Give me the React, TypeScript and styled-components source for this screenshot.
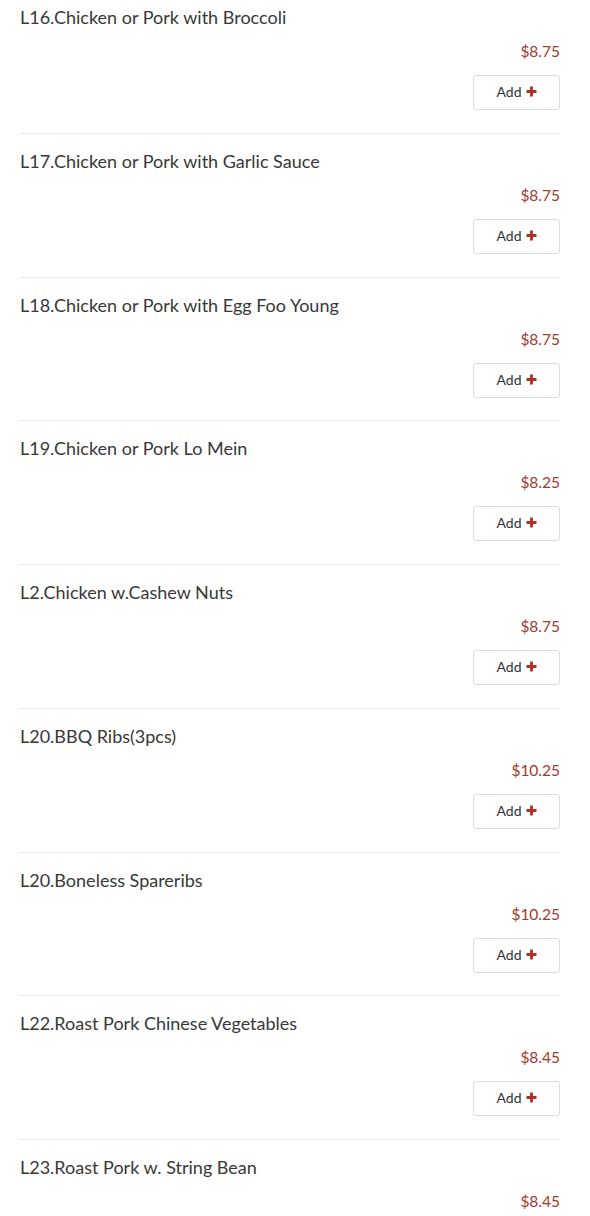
import React from "react";
import styled, { createGlobalStyle } from "styled-components";

const Global = createGlobalStyle`
  html, body { margin: 0; padding: 0; background: #fff; }
  body { font-family: "Lato", "Open Sans", sans-serif; color: #333; }
`;

const List = styled.div`
  width: 540px;
  padding: 5px 30px 0 20px;
`;

const Item = styled.div`
  display: flex;
  flex-direction: column;
  padding: 15px 0 22.75px;
  border-bottom: 1px solid #eaeaea;
  &:first-child { padding-top: 0; }
`;

const Title = styled.div`
  font-family: "Lato", sans-serif;
  font-size: 18px;
  line-height: 24px;
  color: #383838;
`;

const Price = styled.div`
  align-self: flex-end;
  margin-top: 12px;
  font-family: "Lato", sans-serif;
  font-size: 15.5px;
  line-height: 20px;
  color: #a23a2a;
`;

const AddButton = styled.button`
  align-self: flex-end;
  margin-top: 14px;
  width: 87px;
  height: 35px;
  display: flex;
  align-items: center;
  justify-content: center;
  gap: 4px;
  background: #fff;
  border: 1px solid #dcdcdc;
  border-radius: 3px;
  font-family: "Lato", sans-serif;
  font-size: 14px;
  color: #333;
  padding: 0 0 2px;
  cursor: pointer;
`;

const Plus = () => (
  <svg width="11" height="11" viewBox="0 0 11 11">
    <path d="M5.5 0.5v10M0.5 5.5h10" stroke="#b0302a" strokeWidth="2.8" />
  </svg>
);

const items = [
  ["L16.Chicken or Pork with Broccoli", "$8.75"],
  ["L17.Chicken or Pork with Garlic Sauce", "$8.75"],
  ["L18.Chicken or Pork with Egg Foo Young", "$8.75"],
  ["L19.Chicken or Pork Lo Mein", "$8.25"],
  ["L2.Chicken w.Cashew Nuts", "$8.75"],
  ["L20.BBQ Ribs(3pcs)", "$10.25"],
  ["L20.Boneless Spareribs", "$10.25"],
  ["L22.Roast Pork Chinese Vegetables", "$8.45"],
  ["L23.Roast Pork w. String Bean", "$8.45"],
];

export default function App() {
  return (
    <>
      <Global />
      <List>
        {items.map(([name, price], i) => (
          <Item key={i}>
            <Title>{name}</Title>
            <Price>{price}</Price>
            <AddButton>
              Add <Plus />
            </AddButton>
          </Item>
        ))}
      </List>
    </>
  );
}
